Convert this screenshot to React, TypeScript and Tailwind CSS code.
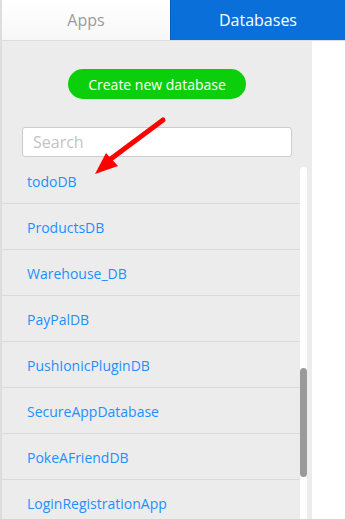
import { Fragment } from "react";

const databases = [
  "todoDB",
  "ProductsDB",
  "Warehouse_DB",
  "PayPalDB",
  "PushIonicPluginDB",
  "SecureAppDatabase",
  "PokeAFriendDB",
  "LoginRegistrationApp",
];

const Arrow = () => (
  <svg
    className="absolute left-0 top-0 pointer-events-none"
    width="345"
    height="519"
    viewBox="0 0 345 519"
  >
    <line
      x1="163"
      y1="120"
      x2="108"
      y2="161"
      stroke="#ff0000"
      strokeWidth="5"
      strokeLinecap="round"
    />
    <polygon points="95,174 106,153 118,166" fill="#ff0000" />
  </svg>
);

const App = () => {
  return (
    <div className="relative w-[345px] h-[519px] overflow-hidden bg-white font-['Open_Sans',sans-serif]">
      <div className="flex h-[41px] border-b border-[#dddddd]">
        <div className="w-[170px] flex items-center justify-center bg-gradient-to-b from-white to-[#f7f7f7] border-l-2 border-[#dddddd] text-[16px] text-[#9b9b9b]">
          Apps
        </div>
        <div className="flex-1 flex items-center justify-center bg-[#0a6fd8] border-l border-[#0b5fb8] text-[16px] text-white">
          Databases
        </div>
      </div>

      <div className="w-[312px] h-full bg-[#ececec] border-l-2 border-[#dddddd]">
        <div className="flex justify-center pt-[28px]">
          <button className="w-[178px] h-[30px] rounded-full bg-[#0ccf0c] text-white text-[14px]">
            Create new database
          </button>
        </div>

        <div className="pl-[20px] pt-[28px]">
          <div className="w-[270px] h-[30px] bg-white border border-[#cccccc] rounded-[3px] flex items-center pl-[10px] text-[16px] text-[#c4c4c4]">
            Search
          </div>
        </div>

        <div className="flex mt-[1px]">
          <div className="w-[298px]">
            {databases.map((name) => (
              <Fragment key={name}>
                <div className="h-[46px] border-b border-[#dadada] flex items-center pl-[25px] pt-[2px] text-[14px] text-[#1e8fff]">
                  {name}
                </div>
              </Fragment>
            ))}
          </div>
          <div className="mt-[9px] w-[7px] h-[400px] bg-white rounded-full">
            <div className="mt-[201px] w-[7px] h-[109px] bg-[#9a9a9a] rounded-full" />
          </div>
        </div>
      </div>

      <Arrow />
    </div>
  );
};

export default App;
